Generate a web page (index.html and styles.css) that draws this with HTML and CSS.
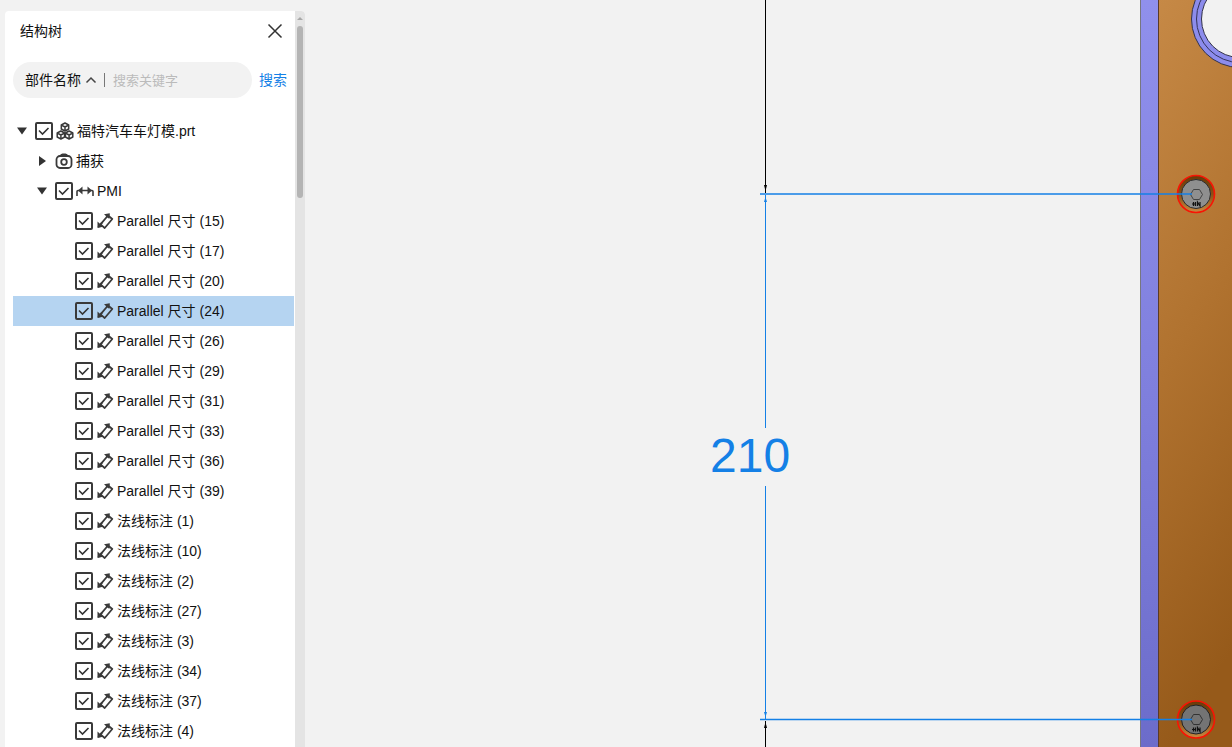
FILE: index.html
```html
<!DOCTYPE html>
<html lang="zh-CN">
<head>
    <meta charset="UTF-8">
    <meta name="viewport" content="width=device-width, initial-scale=1.0">
    <title>结构树</title>
    <link rel="stylesheet" href="styles.css">
</head>
<body>
    <!-- icon set -->
    <svg class="icon-defs" aria-hidden="true">
        <symbol id="icon-close" viewBox="0 0 16 16"><path d="M1.5 1.5l13 13M14.5 1.5l-13 13" fill="none" stroke="#333" stroke-width="1.5"/></symbol>
        <symbol id="icon-down" viewBox="0 0 10 8"><path d="M0 0.5h10L5 7.5z" fill="#333"/></symbol>
        <symbol id="icon-right" viewBox="0 0 8 10"><path d="M1 0v10l7-5z" fill="#333"/></symbol>
        <symbol id="icon-cube" viewBox="0 0 18 18">
            <g fill="none" stroke="#3a3a3a" stroke-width="1.5" stroke-linejoin="round">
                <path d="M9 1l3.7 2v4L9 9 5.3 7V3zM5.3 3L9 5l3.7-2M9 5v4"/>
                <path d="M4.9 9l3.7 2v4l-3.7 2L1.2 15v-4zM1.2 11l3.7 2 3.7-2M4.9 13v4"/>
                <path d="M13.1 9l3.7 2v4l-3.7 2-3.7-2v-4zM9.4 11l3.7 2 3.7-2M13.1 13v4"/>
            </g>
        </symbol>
        <symbol id="icon-camera" viewBox="0 0 18 18">
            <g fill="none" stroke="#3a3a3a" stroke-width="1.8">
                <rect x="1.5" y="4" width="15" height="12" rx="3.5"/>
                <circle cx="9" cy="10" r="2.8"/>
            </g>
            <path d="M4.5 4q1-2.500 3-2.500h3q2 0 3 2.500z" fill="#3a3a3a"/>
        </symbol>
        <symbol id="icon-pmi" viewBox="0 0 18 18">
            <path d="M1 14V9.500q0-1 1-1h14q1 0 1 1V14" fill="none" stroke="#3a3a3a" stroke-width="1.6"/>
            <path d="M2 8.500l4.500-4v8zM16 8.500l-4.500-4v8z" fill="#3a3a3a"/>
        </symbol>
        <symbol id="icon-size" viewBox="0 0 18 18">
            <g fill="none" stroke="#3a3a3a" stroke-width="1.8" stroke-linejoin="round">
                <path d="M12 3.500L16.300 7 8.700 16 4.500 12.400z"/>
                <path d="M2.200 15.200L6 10.700M10.500 5.300L13 2.200"/>
            </g>
            <path d="M1.500 16v-6.500l5.500 5.300zM13.800 1.200L8 2.200l5.300 4.800z" fill="#3a3a3a"/>
        </symbol>
    </svg>

    <div class="workspace">
        <aside class="panel">
            <div class="panel-content">
                <div class="panel-header">
                    <h1 class="panel-title">结构树</h1>
                    <button type="button" class="close-button" aria-label="关闭"><svg class="close-icon"><use href="#icon-close"/></svg></button>
                </div>
                <form class="search">
                    <div class="search-box">
                        <select class="search-type" aria-label="搜索类型">
                            <option>部件名称</option>
                        </select>
                        <input type="text" class="search-input" placeholder="搜索关键字" aria-label="搜索关键字">
                    </div>
                    <button type="button" class="search-button">搜索</button>
                </form>

                <ul class="tree">
                    <li>
                        <div class="row level-1">
                            <button type="button" class="toggle" aria-label="收起"><svg class="arrow-down"><use href="#icon-down"/></svg></button>
                            <label class="node"><input type="checkbox" class="check" checked><svg class="icon"><use href="#icon-cube"/></svg><span>福特汽车车灯模.prt</span></label>
                        </div>
                    </li>
                    <li>
                        <div class="row level-2">
                            <button type="button" class="toggle" aria-label="展开"><svg class="arrow-right"><use href="#icon-right"/></svg></button>
                            <span class="node"><svg class="icon"><use href="#icon-camera"/></svg><span>捕获</span></span>
                        </div>
                    </li>
                    <li>
                        <div class="row level-2">
                            <button type="button" class="toggle" aria-label="收起"><svg class="arrow-down"><use href="#icon-down"/></svg></button>
                            <label class="node"><input type="checkbox" class="check" checked><svg class="icon"><use href="#icon-pmi"/></svg><span>PMI</span></label>
                        </div>
                        <ul class="tree-children">
                            <li class="row level-3"><label class="node"><input type="checkbox" class="check" checked><svg class="icon"><use href="#icon-size"/></svg><span>Parallel 尺寸 (15)</span></label></li>
                            <li class="row level-3"><label class="node"><input type="checkbox" class="check" checked><svg class="icon"><use href="#icon-size"/></svg><span>Parallel 尺寸 (17)</span></label></li>
                            <li class="row level-3"><label class="node"><input type="checkbox" class="check" checked><svg class="icon"><use href="#icon-size"/></svg><span>Parallel 尺寸 (20)</span></label></li>
                            <li class="row level-3 selected"><label class="node"><input type="checkbox" class="check" checked><svg class="icon"><use href="#icon-size"/></svg><span>Parallel 尺寸 (24)</span></label></li>
                            <li class="row level-3"><label class="node"><input type="checkbox" class="check" checked><svg class="icon"><use href="#icon-size"/></svg><span>Parallel 尺寸 (26)</span></label></li>
                            <li class="row level-3"><label class="node"><input type="checkbox" class="check" checked><svg class="icon"><use href="#icon-size"/></svg><span>Parallel 尺寸 (29)</span></label></li>
                            <li class="row level-3"><label class="node"><input type="checkbox" class="check" checked><svg class="icon"><use href="#icon-size"/></svg><span>Parallel 尺寸 (31)</span></label></li>
                            <li class="row level-3"><label class="node"><input type="checkbox" class="check" checked><svg class="icon"><use href="#icon-size"/></svg><span>Parallel 尺寸 (33)</span></label></li>
                            <li class="row level-3"><label class="node"><input type="checkbox" class="check" checked><svg class="icon"><use href="#icon-size"/></svg><span>Parallel 尺寸 (36)</span></label></li>
                            <li class="row level-3"><label class="node"><input type="checkbox" class="check" checked><svg class="icon"><use href="#icon-size"/></svg><span>Parallel 尺寸 (39)</span></label></li>
                            <li class="row level-3"><label class="node"><input type="checkbox" class="check" checked><svg class="icon"><use href="#icon-size"/></svg><span>法线标注 (1)</span></label></li>
                            <li class="row level-3"><label class="node"><input type="checkbox" class="check" checked><svg class="icon"><use href="#icon-size"/></svg><span>法线标注 (10)</span></label></li>
                            <li class="row level-3"><label class="node"><input type="checkbox" class="check" checked><svg class="icon"><use href="#icon-size"/></svg><span>法线标注 (2)</span></label></li>
                            <li class="row level-3"><label class="node"><input type="checkbox" class="check" checked><svg class="icon"><use href="#icon-size"/></svg><span>法线标注 (27)</span></label></li>
                            <li class="row level-3"><label class="node"><input type="checkbox" class="check" checked><svg class="icon"><use href="#icon-size"/></svg><span>法线标注 (3)</span></label></li>
                            <li class="row level-3"><label class="node"><input type="checkbox" class="check" checked><svg class="icon"><use href="#icon-size"/></svg><span>法线标注 (34)</span></label></li>
                            <li class="row level-3"><label class="node"><input type="checkbox" class="check" checked><svg class="icon"><use href="#icon-size"/></svg><span>法线标注 (37)</span></label></li>
                            <li class="row level-3"><label class="node"><input type="checkbox" class="check" checked><svg class="icon"><use href="#icon-size"/></svg><span>法线标注 (4)</span></label></li>
                        </ul>
                    </li>
                </ul>
            </div>
            <div class="scrollbar">
                <span class="scroll-up"></span>
                <span class="scroll-thumb"></span>
            </div>
        </aside>

        <main class="viewer">
            <svg class="model" viewBox="305 0 927 747" preserveAspectRatio="xMaxYMin slice">
                <defs>
                    <linearGradient id="plate" x1="0" y1="0" x2="0.15" y2="1">
                        <stop offset="0" stop-color="#c68946"/>
                        <stop offset="0.5" stop-color="#b0722f"/>
                        <stop offset="1" stop-color="#965a1a"/>
                    </linearGradient>
                    <linearGradient id="edge" x1="0" y1="0" x2="0" y2="1">
                        <stop offset="0" stop-color="#9090ec"/>
                        <stop offset="0.5" stop-color="#8080de"/>
                        <stop offset="1" stop-color="#6c6cca"/>
                    </linearGradient>
                    <linearGradient id="hole" x1="0" y1="0" x2="0" y2="1">
                        <stop offset="0" stop-color="#6a3a08"/>
                        <stop offset="0.5" stop-color="#8a5014"/>
                        <stop offset="1" stop-color="#c98a42"/>
                    </linearGradient>
                </defs>

                <!-- plate -->
                <rect x="1140" y="0" width="18" height="747" fill="url(#edge)"/>
                <rect x="1158" y="0" width="74" height="747" fill="url(#plate)"/>
                <path d="M1140.5 0v747" stroke="#77777f"/>
                <path d="M1158.5 0v747" stroke="#5a3a28"/>
                <circle cx="1240" cy="19" r="48.5" fill="#8c8cec" stroke="#33334a"/>
                <circle cx="1240" cy="19" r="43.5" fill="none" stroke="#33335a"/>
                <circle cx="1240" cy="19" r="38.5" fill="#f2f2f2" stroke="#33334a"/>

                <!-- bolts -->
                <g>
                    <circle cx="1196" cy="194" r="18.5" fill="url(#hole)" stroke="#f81404" stroke-width="1.6"/>
                    <circle cx="1196" cy="194" r="14.5" fill="#8f8f8f" stroke="#2c2c2c"/>
                    <path d="M1190.5 194.500l3-5h6l3 5-3 5h-6z" fill="none" stroke="#444"/>
                    <path d="M1193.5 202v4M1195.5 202v4M1192 204h3M1197.5 206v-4l2.500 4v-4" fill="none" stroke="#111" stroke-width="1.2"/>
                </g>
                <g>
                    <circle cx="1196" cy="719.5" r="18.5" fill="url(#hole)" stroke="#f81404" stroke-width="1.6"/>
                    <circle cx="1196" cy="719.5" r="14.5" fill="#747474" stroke="#222"/>
                    <path d="M1190.5 719.500l3-5h6l3 5-3 5h-6z" fill="none" stroke="#333"/>
                    <path d="M1193.5 727.500v4M1195.5 727.500v4M1192 729.500h3M1197.5 731.500v-4l2.500 4v-4" fill="none" stroke="#111" stroke-width="1.2"/>
                </g>

                <!-- neighbouring dimensions -->
                <path d="M765.5 0v193M765.5 721v26" stroke="#000"/>
                <path d="M764 185h3l-1.500 6zM764 728h3l-1.500-6z" fill="#000"/>

                <!-- selected dimension -->
                <g stroke="#1480e6" fill="#1480e6">
                    <path d="M765.5 195v233M765.5 486v233"/>
                    <path d="M760 194h432M760 719.500h432" stroke-width="1.5"/>
                    <path d="M764 202h3l-1.500-5zM764 712h3l-1.500 5z" stroke="none"/>
                </g>
                <text class="dimension" x="710" y="472">210</text>
            </svg>
        </main>
    </div>
</body>
</html>
```
FILE: styles.css
```css
* {
    box-sizing: border-box;
}
body {
    margin: 0;
    background-color: #f2f2f2;
    color: #111;
    font-family: "Liberation Sans", "Noto Sans CJK SC", sans-serif;
    font-size: 14px;
    line-height: 18px;
    overflow: hidden;
}
button {
    border: none;
    background: none;
    padding: 0;
    font: inherit;
    cursor: pointer;
}
.icon-defs {
    display: none;
}
.workspace {
    display: flex;
    height: 100vh;
}

/* structure tree panel */
.panel {
    display: flex;
    flex: none;
    width: 300px;
    margin: 11px 0 0 5px;
    border-radius: 4px 4px 0 0;
    background-color: #fff;
    overflow: hidden;
}
.panel-content {
    flex: 1;
    padding: 0 1px 0 8px;
    overflow: hidden;
}
.panel-header {
    display: flex;
    justify-content: space-between;
    align-items: center;
    height: 40px;
    padding: 0 11px 0 7px;
}
.panel-title {
    margin: 0;
    font-size: 14px;
    font-weight: normal;
}
.close-button {
    width: 16px;
    height: 16px;
}
.close-icon {
    display: block;
    width: 16px;
    height: 16px;
}
.search {
    display: flex;
    align-items: center;
    gap: 7px;
    margin: 11px 0 18px;
}
.search-box {
    display: flex;
    align-items: center;
    width: 239px;
    height: 36px;
    padding: 0 12px;
    border-radius: 18px;
    background-color: #f2f2f2;
}
.search-type {
    appearance: none;
    width: 72px;
    height: 20px;
    padding: 0;
    border: none;
    color: #111;
    font: inherit;
    background: url("data:image/svg+xml,%3Csvg xmlns='http://www.w3.org/2000/svg' width='12' height='8'%3E%3Cpath d='M1.5 6.5L6 2l4.5 4.5' fill='none' stroke='%23444' stroke-width='1.5'/%3E%3C/svg%3E") no-repeat right center;
}
.search-input {
    flex: 1;
    min-width: 0;
    height: 14px;
    margin-left: 7px;
    padding: 0 0 0 8px;
    border: none;
    border-left: 1px solid #777;
    background: none;
    font-family: inherit;
    font-size: 13px;
    outline: none;
}
.search-input::placeholder {
    color: #bbb;
}
.search-button {
    color: #1480e6;
}

.tree,
.tree-children {
    margin: 0;
    padding: 0;
    list-style: none;
}
.row {
    display: flex;
    align-items: center;
    height: 30px;
}
.row.selected {
    background-color: #b5d4f1;
}
.level-1 {
    padding-left: 1px;
}
.level-2 {
    padding-left: 21px;
}
.level-3 {
    padding-left: 62px;
}
.toggle {
    display: flex;
    justify-content: center;
    align-items: center;
    width: 16px;
    height: 16px;
    margin-right: 5px;
}
.arrow-down {
    width: 10px;
    height: 8px;
}
.arrow-right {
    width: 8px;
    height: 10px;
}
.node {
    display: flex;
    align-items: center;
    white-space: nowrap;
}
.check {
    appearance: none;
    width: 18px;
    height: 18px;
    margin: 0 3px 0 0;
    border: 2px solid #3a3a3a;
    border-radius: 2px;
}
.check:checked {
    background: url("data:image/svg+xml,%3Csvg xmlns='http://www.w3.org/2000/svg' width='14' height='14'%3E%3Cpath d='M2 6.5l3.5 3.5 6-6' fill='none' stroke='%23333' stroke-width='1.6'/%3E%3C/svg%3E") no-repeat center;
}
.icon {
    width: 18px;
    height: 18px;
    margin-right: 3px;
}

.scrollbar {
    display: flex;
    flex-direction: column;
    align-items: center;
    gap: 6px;
    width: 10px;
    padding-top: 6px;
    background-color: #e4e4e4;
}
.scroll-up {
    border: 3px solid transparent;
    border-top: none;
    border-bottom-color: #a8a8a8;
}
.scroll-thumb {
    width: 6px;
    height: 172px;
    border-radius: 3px;
    background-color: #b4b4b4;
}

/* 3D view */
.viewer {
    flex: 1;
    min-width: 0;
}
.model {
    display: block;
    width: 100%;
    height: 100%;
}
.dimension {
    fill: #1480e6;
    font-size: 48px;
}
```
